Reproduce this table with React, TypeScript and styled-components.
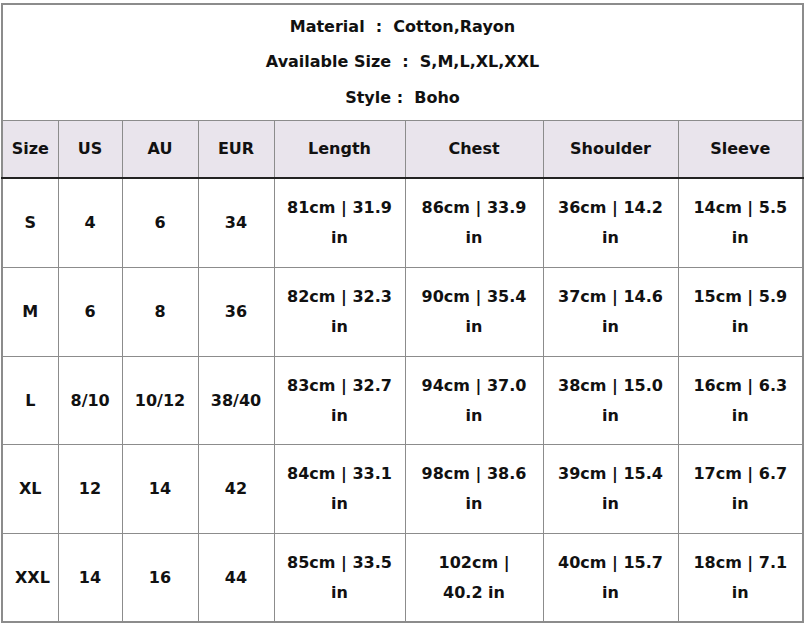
import React from 'react';
import styled, { createGlobalStyle } from 'styled-components';

const GlobalStyle = createGlobalStyle`
  body {
    margin: 0;
    background: #ffffff;
    font-family: 'DejaVu Sans', Verdana, sans-serif;
    color: #111;
  }
`;

const Page = styled.div`
  padding: 3px 0 0 1px;
`;

const Table = styled.table`
  width: 801px;
  table-layout: fixed;
  border-collapse: collapse;
  border: 2px solid #8c8c8c;
  font-size: 16px;
  font-weight: 700;
  text-align: center;
`;

const InfoCell = styled.td`
  height: 114px;
  padding: 0 0 1px;
  border: 1px solid #8c8c8c;
  background: #fff;
`;

const InfoLine = styled.div`
  line-height: 35.5px;
  white-space: pre;
`;

const HeadCell = styled.th`
  height: 54px;
  padding: 0 0 2px;
  background: #e9e4ec;
  font-weight: 700;
  border: 1px solid #8c8c8c;
  border-bottom: 2px solid #222;
`;

const Cell = styled.td<{ $h: number }>`
  height: ${(p) => p.$h}px;
  padding: 0 12px;
  line-height: 30px;
  border: 1px solid #8c8c8c;
`;

const widths = [56, 64, 76, 76, 131, 138, 135, 125];
const heads = ['Size', 'US', 'AU', 'EUR', 'Length', 'Chest', 'Shoulder', 'Sleeve'];

const rows = [
  ['S', '4', '6', '34', '81cm | 31.9 in', '86cm | 33.9 in', '36cm | 14.2 in', '14cm | 5.5 in'],
  ['M', '6', '8', '36', '82cm | 32.3 in', '90cm | 35.4 in', '37cm | 14.6 in', '15cm | 5.9 in'],
  ['L', '8/10', '10/12', '38/40', '83cm | 32.7 in', '94cm | 37.0 in', '38cm | 15.0 in', '16cm | 6.3 in'],
  ['XL', '12', '14', '42', '84cm | 33.1 in', '98cm | 38.6 in', '39cm | 15.4 in', '17cm | 6.7 in'],
  ['XXL', '14', '16', '44', '85cm | 33.5 in', '102cm | 40.2 in', '40cm | 15.7 in', '18cm | 7.1 in'],
];

const rowHeights = [88, 88, 87, 88, 87];

const App = () => {
  return (
    <Page>
      <GlobalStyle />
      <Table>
        <colgroup>
          {widths.map((w, i) => (
            <col key={i} style={{ width: w }} />
          ))}
        </colgroup>
        <tbody>
          <tr>
            <InfoCell colSpan={8}>
              <InfoLine>Material  :  Cotton,Rayon</InfoLine>
              <InfoLine>Available Size  :  S,M,L,XL,XXL</InfoLine>
              <InfoLine>Style :  Boho</InfoLine>
            </InfoCell>
          </tr>
          <tr>
            {heads.map((h) => (
              <HeadCell key={h}>{h}</HeadCell>
            ))}
          </tr>
          {rows.map((r, i) => (
            <tr key={r[0]}>
              {r.map((v, j) => (
                <Cell key={j} $h={rowHeights[i]}>
                  {v}
                </Cell>
              ))}
            </tr>
          ))}
        </tbody>
      </Table>
    </Page>
  );
};

export default App;
